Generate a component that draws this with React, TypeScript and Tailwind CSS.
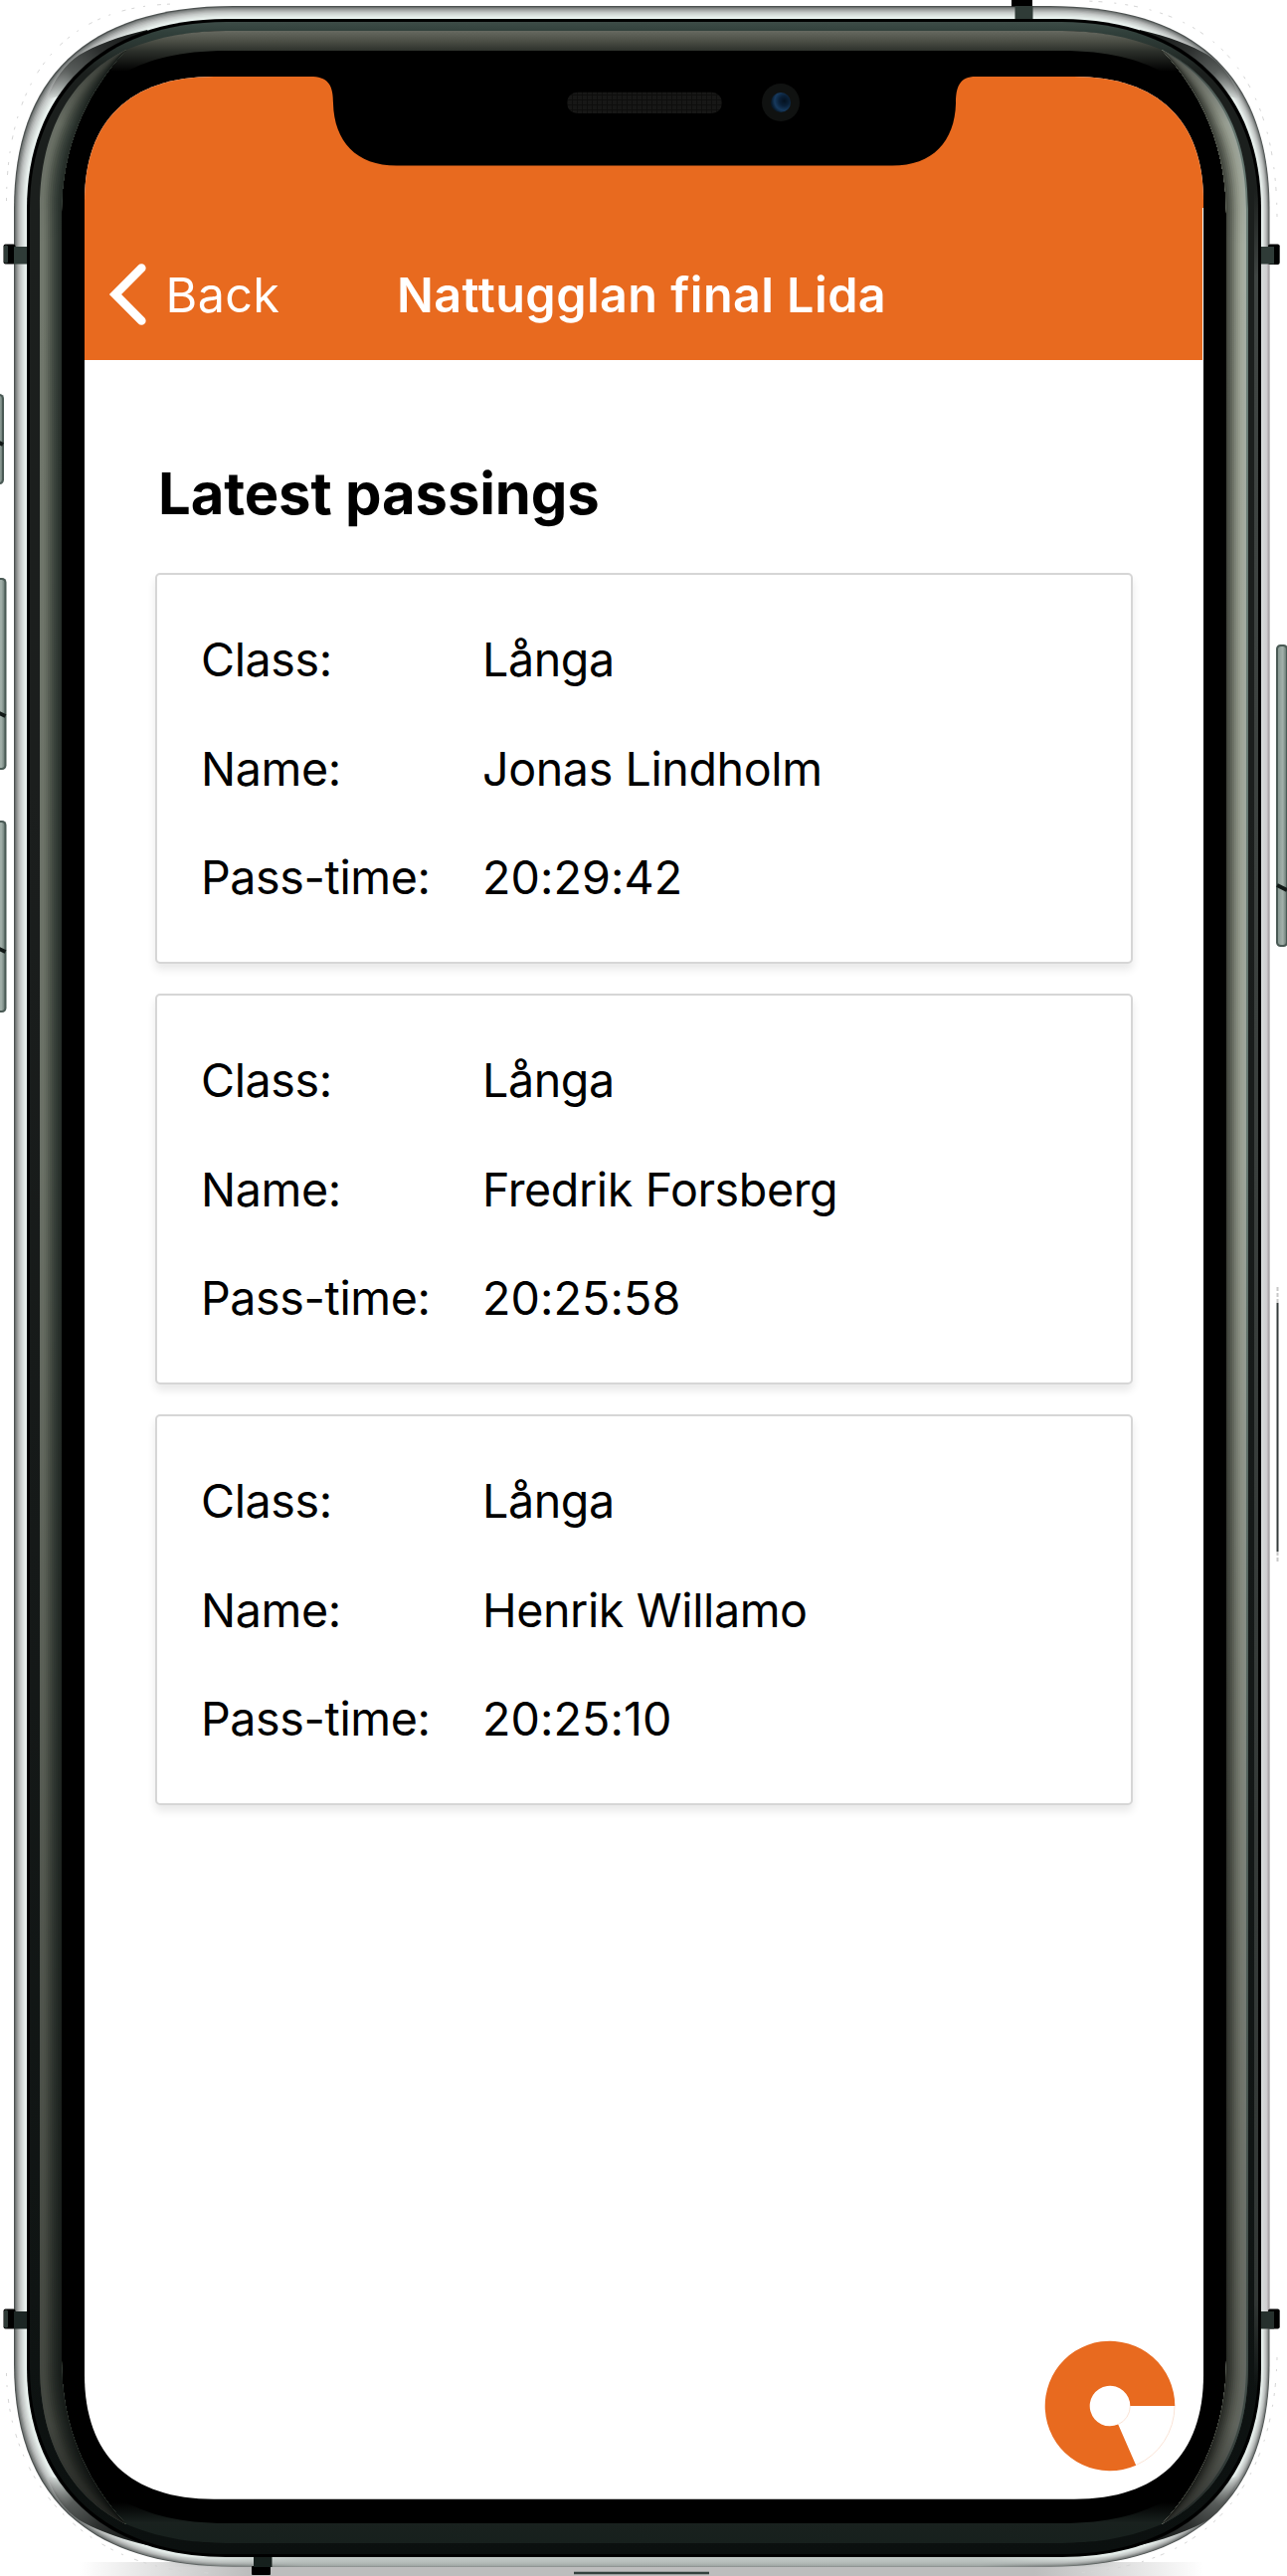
import React from "react";

const passings = [
  { cls: "Långa", name: "Jonas Lindholm", time: "20:29:42" },
  { cls: "Långa", name: "Fredrik Forsberg", time: "20:25:58" },
  { cls: "Långa", name: "Henrik Willamo", time: "20:25:10" },
];

const rim = ["#4d5251", "#777b7a", "#8c908f", "#a3a6a5", "#b5b8b7", "#c3c7c6", "#ccd1cf", "#d6dcda", "#dfe6e3", "#e6eeeb", "#ebf4f1"];
const leftSheen = ["#70776c", "#72786d", "#6c7367", "#646b60", "#596056", "#4e564c", "#444c44", "#3b443d", "#343d37", "#2d3630", "#28302b"];
const rightSheen = ["#6b7e77", "#a5aea4", "#a5ac9f", "#a1a89a", "#989e90", "#8d9385", "#80867a", "#71766a", "#62675c", "#545950", "#484c43"];

/** Closed outline with continuous-curvature corners; r is the corner reach, a the control inset. */
function squircle(x1: number, y1: number, x2: number, y2: number, rx: number, ry: number, ax: number, ay: number) {
  return (
    `M${x1} ${y1 + ry}C${x1} ${y1 + ay} ${x1 + ax} ${y1} ${x1 + rx} ${y1}` +
    `H${x2 - rx}C${x2 - ax} ${y1} ${x2} ${y1 + ay} ${x2} ${y1 + ry}` +
    `V${y2 - ry}C${x2} ${y2 - ay} ${x2 - ax} ${y2} ${x2 - rx} ${y2}` +
    `H${x1 + rx}C${x1 + ax} ${y2} ${x1} ${y2 - ay} ${x1} ${y2 - ry}Z`
  );
}

/** Side reflection that tapers to a tip at both ends; t moves its outer edge inwards. */
function sheen(t: number) {
  const m = (a: number, b: number) => a + (b - a) * t;
  const x = m(40, 62);
  const y = m(210, 215);
  const c1 = [x, m(110, 150)];
  const c2 = [m(90, 85), m(68, 95)];
  const f = (v: number) => 2588 - v;
  return (
    `M${x} ${y}C${c1[0]} ${c1[1]} ${c2[0]} ${c2[1]} 127 50C85 95 62 150 62 215` +
    `V${f(215)}C62 ${f(150)} 85 ${f(95)} 127 ${f(50)}C${c2[0]} ${f(c2[1])} ${c1[0]} ${f(c1[1])} ${x} ${f(y)}Z`
  );
}

function Stops({ list }: { list: [number, string, number?][] }) {
  return (
    <>
      {list.map(([o, c, a]) => (
        <stop key={o} offset={o} stopColor={c} stopOpacity={a ?? 1} />
      ))}
    </>
  );
}

function SideButton({ x, y, w, h, cut }: { x: number; y: number; w: number; h: number; cut: number }) {
  return (
    <g>
      <rect x={x} y={y} width={w} height={h} rx="4.5" fill="#4a5a55" />
      <rect x={x + 2} y={y + 2} width={w - 4} height={h - 4} rx="3" fill="url(#button)" />
      <path d={`M${x + 1} ${cut - 3} L${x + w - 1} ${cut + 2}`} stroke="#111816" strokeWidth="4" />
    </g>
  );
}

const rimShadow = "M47 100C54 80 66 64 80 55C95 46 118 37 148 30L150 33C110 45 84 66 62 96Z";

function PhoneBody() {
  return (
    <svg className="absolute inset-0" width="1294" height="2590" viewBox="0 0 1294 2590" aria-hidden="true">
      <defs>
        <linearGradient id="button">
          <Stops list={[[0, "#899a94"], [0.6, "#a3b0aa"], [1, "#6f807a"]]} />
        </linearGradient>
        <linearGradient id="dark" gradientUnits="userSpaceOnUse" x1="0" y1="22" x2="0" y2="2568">
          <Stops list={[[0, "#3d4c47"], [0.004, "#31403b"], [0.02, "#1b1f1d"], [0.3, "#1b1e1d"], [0.9, "#0f1413"], [1, "#0b100f"]]} />
        </linearGradient>
        <linearGradient id="top" gradientUnits="userSpaceOnUse" x1="0" y1="31" x2="0" y2="72">
          <Stops list={[[0, "#666960"], [0.25, "#4c4f46"], [0.5, "#2c302b"], [1, "#000000"]]} />
        </linearGradient>
        <linearGradient id="bottom" gradientUnits="userSpaceOnUse" x1="0" y1="2516" x2="0" y2="2557">
          <Stops list={[[0, "#000000"], [0.5, "#19211e"], [1, "#17201d"]]} />
        </linearGradient>
        <linearGradient id="shade" gradientUnits="userSpaceOnUse" x1="0" y1="50" x2="0" y2="2538">
          <Stops
            list={[
              [0, "#000", 0.55],
              [0.03, "#000", 0.08],
              [0.08, "#000", 0],
              [0.45, "#000", 0.06],
              [0.88, "#000", 0.36],
              [0.96, "#000", 0.42],
              [1, "#000", 0.75],
            ]}
          />
        </linearGradient>
        <linearGradient id="floor">
          <Stops list={[[0, "#bdbdbd", 0], [0.15, "#bdbdbd"], [0.85, "#bdbdbd"], [1, "#bdbdbd", 0]]} />
        </linearGradient>
        <linearGradient id="rimRight" gradientUnits="userSpaceOnUse" x1="1268" y1="0" x2="1277" y2="0">
          <Stops list={[[0, "#d8dddc"], [0.6, "#cfcfd0"], [0.85, "#aaa5a8"], [1, "#dddddd"]]} />
        </linearGradient>
        <linearGradient id="rimBottom">
          <Stops list={[[0, "#b3bbb8", 0], [0.15, "#b3bbb8", 0.75], [0.85, "#b3bbb8", 0.75], [1, "#b3bbb8", 0]]} />
        </linearGradient>
        <linearGradient id="edgeRight" gradientUnits="userSpaceOnUse" x1="0" y1="190" x2="0" y2="2400">
          <Stops list={[[0, "#3f4442", 0], [0.04, "#3f4442"], [0.96, "#323735"], [1, "#323735", 0]]} />
        </linearGradient>
        <linearGradient id="corner" gradientUnits="userSpaceOnUse" x1="50" y1="100" x2="125" y2="35">
          <Stops list={[[0, "#3a3c3b", 0], [0.35, "#4a4e4c", 0.9], [0.7, "#2c2f2e"], [1, "#1c1f1e"]]} />
        </linearGradient>
        <radialGradient id="lens" cx="0.68" cy="0.42" r="0.65">
          <Stops list={[[0, "#04111f"], [0.4, "#0a2038"], [0.75, "#173a5e"], [1, "#081a2b"]]} />
        </radialGradient>
        <pattern id="mesh" width="5" height="5" patternUnits="userSpaceOnUse">
          <rect width="5" height="5" fill="#171716" />
          <path d="M0 0H5M0 0V5" stroke="#0e0e0d" strokeWidth="2" />
        </pattern>
      </defs>

      {/* surface shadow */}
      <rect x="80" y="2576" width="1130" height="14" fill="url(#floor)" />

      {/* side buttons */}
      <SideButton x={-8} y={396} w={12} h={91} cut={445} />
      <SideButton x={-6} y={581} w={12.5} h={193} cut={718} />
      <SideButton x={-6} y={825} w={12.5} h={193} cut={955} />
      <SideButton x={1283} y={648} w={12} h={304} cut={893} />
      <path d="M1284.500 1310V1560" stroke="#343b3b" strokeWidth="2" />
      <path d="M1284.500 1294V1310M1284.500 1560V1570" stroke="#c8c8c8" strokeWidth="2" strokeDasharray="4 2" />

      {/* faint dotted outline at the corners */}
      <g fill="none" stroke="#d6d6d6" strokeWidth="1" strokeDasharray="3 9 2 12 4 6">
        <path d="M6.500 202C7 80 62 6 175 4" />
        <path d="M1284 218C1283 80 1225 5 1092 1" />
        <path d="M6.500 2386C8 2500 90 2584 210 2587" />
        <path d="M1284 2370C1281 2500 1215 2580 1080 2587" />
      </g>

      {/* polished rim, built from nested outlines */}
      {rim.map((c, i) => {
        const t = i / rim.length;
        return (
          <path
            key={c}
            d={squircle(14 + 13 * t, 6 + 13 * t, 1276.5 - 8.5 * t, 2580.7 - 9.7 * t, 221 - 20 * t, 204 - 13 * t, 71 + 2 * t, 74 + 2 * t)}
            fill={c}
          />
        );
      })}
      <rect x="1268" y="256" width="8.800" height="2076" fill="url(#rimRight)" />
      <rect x="160" y="2571" width="970" height="9.700" fill="url(#rimBottom)" />
      <path d={rimShadow} fill="url(#corner)" />
      <path d={rimShadow} fill="url(#corner)" transform="matrix(-1 0 0 1 1294 0)" />
      <path d={rimShadow} fill="url(#corner)" transform="matrix(1 0 0 -1 0 2589)" />
      <path d={rimShadow} fill="url(#corner)" transform="matrix(-1 0 0 -1 1294 2589)" />

      {/* antenna bands */}
      <g fill="#000">
        <rect x="3.500" y="245.500" width="12" height="20" rx="2" />
        <rect x="3.500" y="2321.600" width="12" height="20" rx="2" />
        <rect x="1275" y="245.500" width="11.700" height="20.500" rx="2" />
        <rect x="1275" y="2321.600" width="11.700" height="20" rx="2" />
        <rect x="1017" y="-2" width="21" height="8.500" />
        <rect x="253" y="2580" width="19" height="9" rx="1" />
      </g>
      <g fill="#2f3b37">
        <rect x="4" y="246.500" width="4" height="18" rx="1.500" />
        <rect x="4" y="2322.600" width="4" height="18" rx="1.500" />
        <rect x="14" y="248" width="14" height="17.500" />
        <rect x="14" y="2324" width="14" height="17.500" fill="#1c2624" />
        <rect x="1266" y="248" width="15" height="17.500" />
        <rect x="1266" y="2324" width="15" height="17.500" fill="#26302d" />
        <rect x="1020.500" y="6" width="18" height="14" />
        <rect x="255" y="2570" width="18.500" height="11" fill="#16201d" />
      </g>

      {/* bezel */}
      <path d={squircle(27, 19, 1268, 2571, 201, 191, 73, 76)} fill="#000" />
      <path d={squircle(30, 22, 1265, 2568, 198, 188, 72, 76)} fill="url(#dark)" />
      <rect x="1261" y="190" width="4" height="2210" fill="url(#edgeRight)" />
      <path d={squircle(40, 31, 1255, 2557, 188, 179, 65, 79)} fill="#000" />
      <path d="M127 50C160 36 195 31 228 31H1067C1100 31 1135 36 1168 50L1188 72H1168C1145 60 1115 51 1067 51H228C180 51 150 60 127 72H107Z" fill="url(#top)" />
      <path d="M127 2538C160 2552 195 2557 228 2557H1067C1100 2557 1135 2552 1168 2538L1188 2516H1168C1145 2528 1115 2537 1067 2537H228C180 2537 150 2528 127 2516H107Z" fill="url(#bottom)" />
      {leftSheen.map((c, i) => (
        <path key={c} d={sheen(i / leftSheen.length)} fill={c} />
      ))}
      <path d={sheen(0)} fill="url(#shade)" />
      <g transform="matrix(-1 0 0 1 1295 0)">
        {rightSheen.map((c, i) => (
          <path key={c} d={sheen(i / rightSheen.length)} fill={c} />
        ))}
        <path d={sheen(0)} fill="url(#shade)" />
      </g>

      {/* charging port */}
      <path d="M577 2587H713" stroke="#33413d" strokeWidth="2.500" />
    </svg>
  );
}

function Notch() {
  return (
    <svg className="absolute left-[230px] top-0" width="666" height="90" viewBox="315 77 666 90" aria-hidden="true">
      <path d="M315 77C331 78 335 87 335 104C336 142 358 166.600 399 166.600H897C938 166.600 960 142 961 104C961 87 965 77 981 77Z" fill="#000" />
      <rect x="570" y="92.700" width="156" height="21.300" rx="10.500" fill="url(#mesh)" />
      <circle cx="785" cy="103" r="19" fill="#101211" />
      <circle cx="785" cy="103" r="10" fill="url(#lens)" />
    </svg>
  );
}

function Row({ label, value }: { label: string; value: string }) {
  return (
    <div className="flex h-[109.5px] items-center">
      <dt className="w-[283px]">{label}</dt>
      <dd>{value}</dd>
    </div>
  );
}

export default function App() {
  return (
    <div className="relative h-[2590px] w-[1294px] overflow-hidden bg-white pl-[85px] pt-[77px] font-['Inter',sans-serif] text-black">
      <PhoneBody />
      <div className="relative h-[2435.7px] w-[1125px] overflow-hidden bg-white [clip-path:path('M0_125C0_44_46_0_130_0H995C1079_0_1125_44_1125_125V2310.7C1125_2391.7_1079_2435.7_995_2435.7H130C46_2435.7_0_2391.7_0_2310.7Z')]">
        <header className="flex h-[285.3px] w-full items-end bg-[#e86a1f] text-white">
          <div className="flex h-[132px] w-full items-center">
            <svg className="ml-[23px] mt-[-1px] shrink-0" width="40" height="66" viewBox="0 0 40 66" aria-hidden="true">
              <path d="M34.300 6.500L8 33L34.300 59.500" fill="none" stroke="#fff" strokeWidth="8.700" strokeLinecap="round" strokeLinejoin="miter" />
            </svg>
            <span className="ml-[18.5px] mt-[2px] w-[232.500px] text-[48.500px] font-normal tracking-[0.4px]">Back</span>
            <h1 className="mt-[2px] whitespace-nowrap text-[48.500px] font-semibold tracking-[0.45px]">Nattugglan final Lida</h1>
          </div>
        </header>
        <Notch />
        <div className="absolute right-0 top-[132px] h-[154px] w-px bg-white" />
        <main className="pl-[70.5px] pt-[99px]">
          <h2 className="h-[70px] pl-[3.5px] text-[58px] font-bold leading-[70px] tracking-[-0.15px]">Latest passings</h2>
          <div className="mt-[45px] flex flex-col gap-[30.5px]">
            {passings.map((p) => (
              <dl
                key={p.name}
                className="h-[392.5px] w-[983px] rounded-[5px] border-2 border-[#d6d6d6] bg-white pl-[44.5px] pt-[31px] text-[46.600px] tracking-[-0.4px] shadow-[0_6px_9px_rgba(0,0,0,0.09)]"
              >
                <Row label="Class:" value={p.cls} />
                <Row label="Name:" value={p.name} />
                <div className="flex h-[109.5px] items-center">
                  <dt className="w-[283px]">Pass-time:</dt>
                  <dd className="tracking-[0.1px]">{p.time}</dd>
                </div>
              </dl>
            ))}
          </div>
        </main>
        <button className="absolute bottom-[26.500px] right-[27.500px]" aria-label="Menu">
          <svg width="134" height="134" viewBox="-67 -67 134 134">
            <path d="M65.300 0A65.300 65.300 0 1 0 26.200 59.800L8.200 18.600A20.300 20.300 0 1 1 20.300 0Z" fill="#e86a1f" />
            <path d="M65 0A65 65 0 0 1 26.200 59.500M20.300 0A20.300 20.300 0 0 1 8.200 18.600" fill="none" stroke="#fae3d5" />
          </svg>
        </button>
      </div>
    </div>
  );
}
